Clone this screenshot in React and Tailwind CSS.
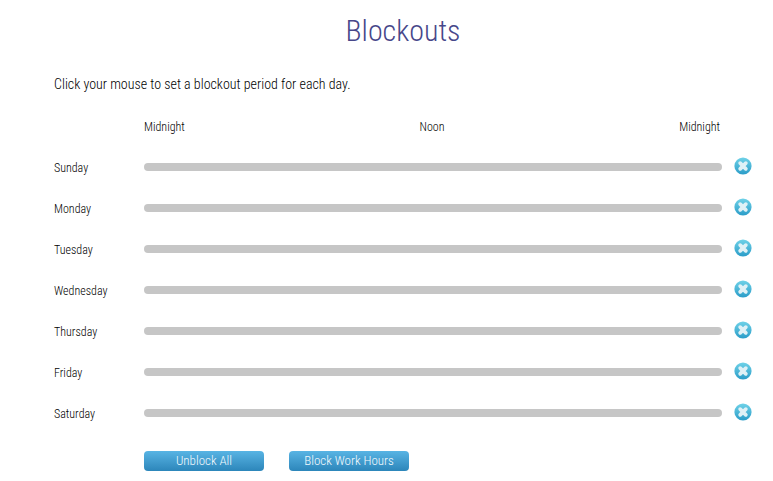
const days = ["Sunday","Monday","Tuesday","Wednesday","Thursday","Friday","Saturday"];

function XIcon() {
  return (
    <svg width="18" height="18" viewBox="0 0 18 18" className="block">
      <defs>
        <linearGradient id="xg" x1="0" y1="0" x2="0" y2="1">
          <stop offset="0" stopColor="#6fd2e8" />
          <stop offset="1" stopColor="#2a9cc8" />
        </linearGradient>
      </defs>
      <circle cx="9" cy="9" r="8.6" fill="url(#xg)" />
      <path d="M6.2 6.2 L11.8 11.8 M11.8 6.2 L6.2 11.8" stroke="#dff1f6" strokeWidth="3.8" strokeLinecap="round" />
    </svg>
  );
}

function Row({ day }) {
  return (
    <div className="flex items-center h-[41px] text-[12px]">
      <div className="w-[90px] shrink-0 text-[#000] pt-[2px]">{day}</div>
      <div className="w-[578px] h-[8px] rounded-full bg-[#c6c6c6]"></div>
      <div className="ml-[12px] -mt-[1px]"><XIcon /></div>
    </div>
  );
}

function Btn({ w, children }) {
  return (
    <button className={`${w} h-[20px] rounded-[4px] bg-gradient-to-b from-[#58b4e4] to-[#2c86ba] text-[#f4fafd] text-[13px] leading-[20px] text-center`}>
      {children}
    </button>
  );
}

export default function App() {
  return (
    <div className="w-[773px] h-[481px] bg-white overflow-hidden pl-[54px] font-['Roboto',sans-serif] font-light [font-stretch:87%] text-[#000]">
      <h1 className="w-[698px] pt-[12px] text-center text-[30px] leading-[38px] font-light text-[#47478a]">Blockouts</h1>
      <p className="mt-[25px] text-[14px] leading-[18px]">Click your mouse to set a blockout period for each day.</p>
      <div className="mt-[26px] ml-[90px] w-[576px] flex justify-between text-[12px] leading-[16px]">
        <span>Midnight</span><span>Noon</span><span>Midnight</span>
      </div>
      <div className="mt-[11px]">
        {days.map(d => <Row key={d} day={d} />)}
      </div>
      <div className="mt-[18px] ml-[90px] flex gap-[25px]">
        <Btn w="w-[120px]">Unblock All</Btn>
        <Btn w="w-[120px]">Block Work Hours</Btn>
      </div>
    </div>
  );
}
